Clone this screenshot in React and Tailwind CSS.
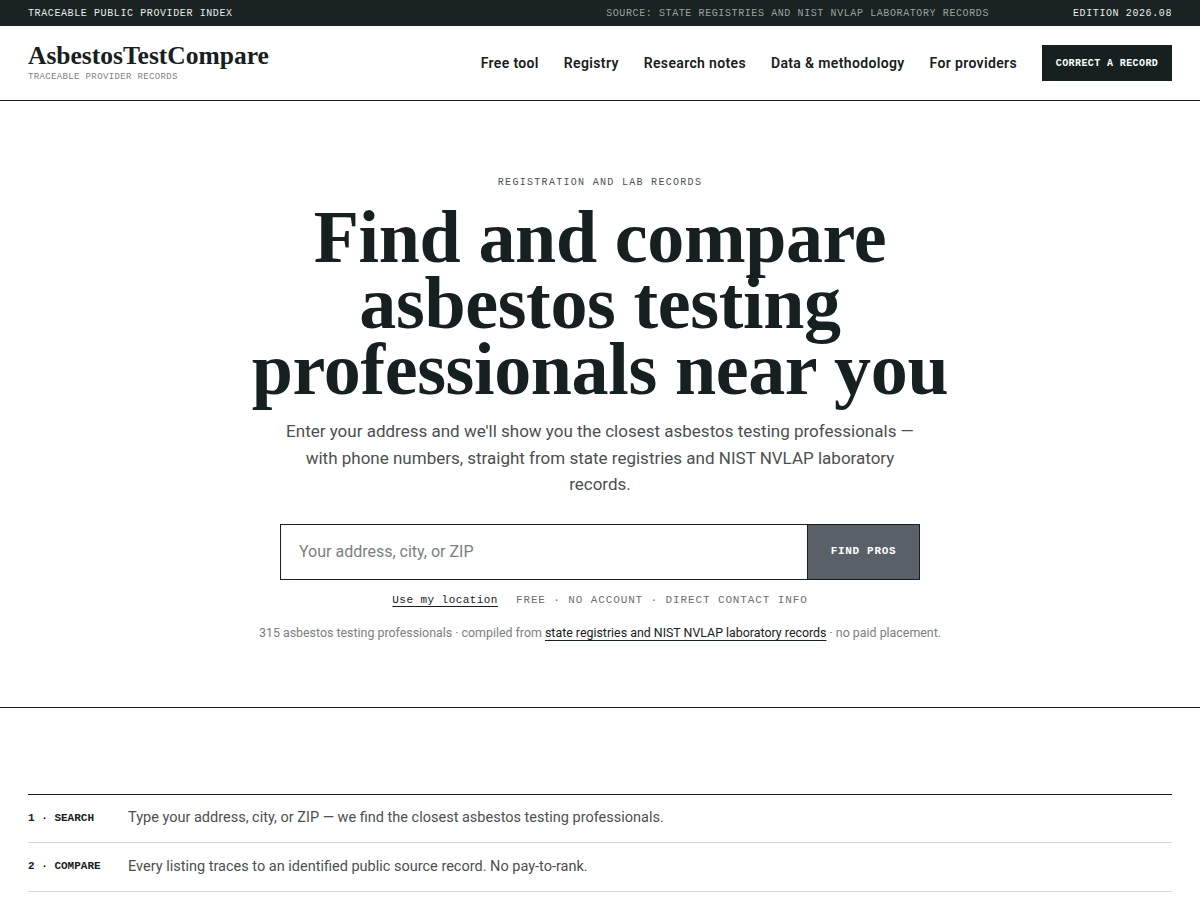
import React from "react";

const mono = "font-['Liberation_Mono','DejaVu_Sans_Mono',monospace]";
const sans = "font-['Roboto','Liberation_Sans',sans-serif]";
const serif = "font-['Liberation_Serif','DejaVu_Serif',serif]";

export default function App() {
  return (
    <div className={`min-h-[900px] bg-white text-[#172020] ${sans}`}>
      <div className={`flex h-[26px] items-center justify-between bg-[#1b2222] px-[28px] text-[10px] tracking-[0.06em] ${mono}`}>
        <span className="text-[#e8ecec]">TRACEABLE PUBLIC PROVIDER INDEX</span>
        <div className="flex items-center gap-[84px]">
          <span className="text-[#9aa2a2]">SOURCE: STATE REGISTRIES AND NIST NVLAP LABORATORY RECORDS</span>
          <span className="text-[#e8ecec]">EDITION 2026.08</span>
        </div>
      </div>

      <header className="flex h-[75px] items-center justify-between border-b border-[#172020] px-[28px]">
        <div className="flex flex-col">
          <span className={`text-[25.5px] font-bold leading-[27px] text-[#172020] ${serif}`}>AsbestosTestCompare</span>
          <span className={`mt-[2px] text-[9px] tracking-[0.04em] text-[#7a8282] ${mono}`}>TRACEABLE PROVIDER RECORDS</span>
        </div>
        <nav className="flex items-center gap-[25px] text-[14px] font-semibold tracking-[0.025em] text-[#172020]">
          <a>Free tool</a>
          <a>Registry</a>
          <a>Research notes</a>
          <a>Data &amp; methodology</a>
          <a>For providers</a>
          <a className={`flex h-[36px] w-[130px] items-center justify-center bg-[#172020] text-[10px] font-bold tracking-[0.04em] text-white ${mono}`}>CORRECT A RECORD</a>
        </nav>
      </header>

      <section className="flex flex-col items-center border-b border-[#172020] pt-[74px] pb-[64px]">
        <div className={`text-[10px] tracking-[0.13em] text-[#4a5252] ${mono}`}>REGISTRATION AND LAB RECORDS</div>
        <h1 className={`mt-[14px] text-center text-[74px] font-bold leading-[66px] tracking-[-0.005em] text-[#172020] ${serif}`}>
          Find and compare<br />asbestos testing<br />professionals near you
        </h1>
        <p className="mt-[16px] w-[642px] text-center text-[17px] leading-[26.5px] text-[#4a5050]">
          Enter your address and we'll show you the closest asbestos testing professionals — with phone numbers, straight from state registries and NIST NVLAP laboratory records.
        </p>
        <div className="mt-[26px] flex h-[56px] w-[640px] border border-[#172020]">
          <div className="flex flex-1 items-center px-[18px] text-[16px] text-[#7a7f80]">Your address, city, or ZIP</div>
          <div className={`flex w-[112px] items-center justify-center border-l border-[#172020] bg-[#5a6068] text-[11px] font-bold tracking-[0.06em] text-white ${mono}`}>FIND PROS</div>
        </div>
        <div className={`mt-[12px] flex items-center gap-[18px] text-[11px] ${mono}`}>
          <span className="tracking-[0.04em] text-[#172020] underline underline-offset-[3px]">Use my location</span>
          <span className="tracking-[0.08em] text-[#6a7070]">FREE · NO ACCOUNT · DIRECT CONTACT INFO</span>
        </div>
        <div className="mt-[16px] text-[12.4px] text-[#7a8080]">
          315 asbestos testing professionals · compiled from{" "}
          <span className="text-[#172020] underline underline-offset-[3px]">state registries and NIST NVLAP laboratory records</span>
          {" "}· no paid placement.
        </div>
      </section>

      <section className="px-[28px] pt-[86px]">
        <div className="border-t border-[#172020]">
          <div className="flex h-[48px] items-center border-b border-[#d4d6d6]">
            <span className={`w-[100px] text-[11px] font-bold text-[#172020] ${mono}`}>1 · SEARCH</span>
            <span className="text-[14.5px] text-[#4a5050]">Type your address, city, or ZIP — we find the closest asbestos testing professionals.</span>
          </div>
          <div className="flex h-[49px] items-center border-b border-[#d4d6d6]">
            <span className={`w-[100px] text-[11px] font-bold text-[#172020] ${mono}`}>2 · COMPARE</span>
            <span className="text-[14.5px] text-[#4a5050]">Every listing traces to an identified public source record. No pay-to-rank.</span>
          </div>
        </div>
      </section>
    </div>
  );
}
